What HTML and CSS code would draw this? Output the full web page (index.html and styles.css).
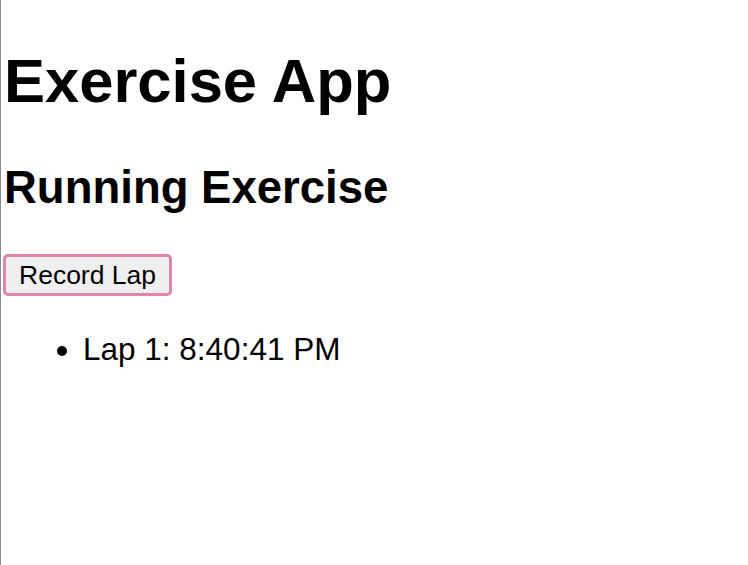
FILE: index.html
```html
<!DOCTYPE html>
<html>
<head>
<meta charset="utf-8">
<link rel="stylesheet" href="styles.css">
</head>
<body>
<div class="page">
  <h1 class="title">Exercise App</h1>
  <h2 class="subtitle">Running Exercise</h2>
  <button class="lap-btn">Record Lap</button>
  <ul class="laps">
    <li>Lap 1: 8:40:41 PM</li>
  </ul>
</div>
</body>
</html>
```
FILE: styles.css
```css
html, body {
  margin: 0;
  padding: 0;
  background: #fff;
}
body {
  font-family: "Liberation Sans", Arial, sans-serif;
  color: #000;
}
.page {
  min-height: 565px;
  box-sizing: border-box;
  border-left: 1px solid #8a8a8a;
  padding-left: 3px;
  padding-top: 45px;
  overflow: hidden;
}
.title {
  font-size: 61.5px;
  font-weight: bold;
  margin: 0;
}
.subtitle {
  font-size: 45.5px;
  font-weight: bold;
  margin: 46px 0 0;
}
.lap-btn {
  display: block;
  margin: 40px 0 0 -1px;
  font-family: "Liberation Sans", Arial, sans-serif;
  font-size: 26.5px;
  color: #000;
  background: #efefef;
  border: 3px solid #de86ac;
  border-radius: 5px;
  padding: 3px 13px;
  line-height: 30px;
}
.laps {
  margin: 35px 0 0;
  padding-left: 79px;
  font-size: 31.5px;
}
```
